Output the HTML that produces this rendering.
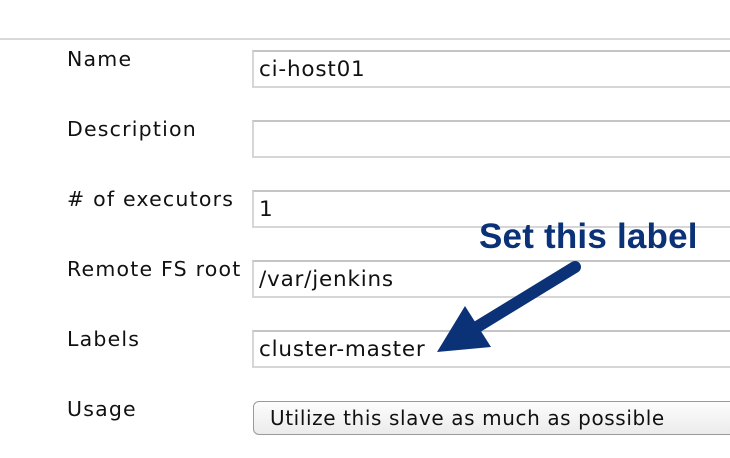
<!DOCTYPE html>
<html><head><style>
body{margin:0;width:730px;height:458px;background:#fff;position:relative;overflow:hidden;font-family:"DejaVu Sans","Liberation Sans",sans-serif;}
.line{position:absolute;left:0;top:38px;width:730px;height:2px;background:#d9d9d6;}
.lbl{position:absolute;left:67px;font-size:20.5px;letter-spacing:1.2px;color:#111;}
.inp{position:absolute;left:252px;width:490px;height:34px;border:2px solid #d6d6d6;border-top-color:#c4c4c4;box-sizing:content-box;font-size:21.5px;letter-spacing:0.8px;line-height:36px;padding-left:5px;color:#111;}
.sel{position:absolute;left:253px;top:401px;width:490px;height:32px;border:1px solid #9a9a9a;border-radius:6px;background:linear-gradient(#fdfdfd,#ebebeb);font-size:20px;letter-spacing:0.6px;line-height:32px;padding-left:16px;color:#111;}
.callout{position:absolute;left:479px;top:217px;font-family:"Liberation Sans",sans-serif;font-weight:bold;font-size:35px;color:#0b3177;letter-spacing:0.2px;}
</style></head><body>
<div class="line"></div>
<div class="lbl" style="top:47px">Name</div>
<div class="lbl" style="top:117px">Description</div>
<div class="lbl" style="top:187px"># of executors</div>
<div class="lbl" style="top:257px">Remote FS root</div>
<div class="lbl" style="top:327px">Labels</div>
<div class="lbl" style="top:397px">Usage</div>
<div class="inp" style="top:50px">ci-host01</div>
<div class="inp" style="top:120px"></div>
<div class="inp" style="top:190px">1</div>
<div class="inp" style="top:260px">/var/jenkins</div>
<div class="inp" style="top:330px">cluster-master</div>
<div class="sel">Utilize this slave as much as possible</div>
<div class="callout">Set this label</div>
<svg style="position:absolute;left:0;top:0" width="730" height="458">
<line x1="575" y1="267" x2="472" y2="330" stroke="#0b3177" stroke-width="12" stroke-linecap="round"/>
<polygon points="465,306 491,347 437,352" fill="#0b3177"/>
</svg>
</body></html>
